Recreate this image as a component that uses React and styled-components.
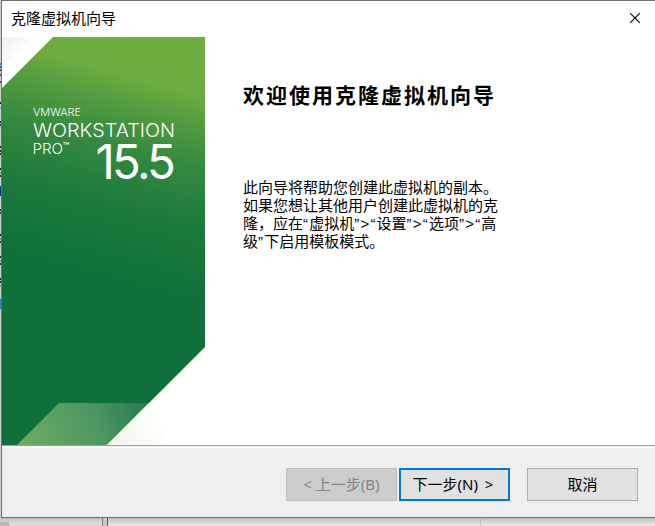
import React from "react";
import styled, { createGlobalStyle, css } from "styled-components";

const GlobalStyle = createGlobalStyle`
  * { box-sizing: border-box; }
  body { margin: 0; overflow: hidden; background: #e6e6e6; }
  button { font: inherit; }
`;

const Desktop = styled.div`
  width: 655px;
  height: 526px;
  display: grid;
  grid-template-columns: 1px 654px;
  grid-template-rows: 518px 8px;
  font-family: "Noto Sans CJK SC", sans-serif;
`;

const EdgeStrip = styled.div`
  background: #cfcfcf;
`;

const EdgeMarks = styled.svg`
  display: block;
`;

const Dialog = styled.section`
  display: flex;
  flex-direction: column;
  background: #fff;
  border: 1px solid #6e6e6e;
  border-right: 0;
`;

const TitleBar = styled.header`
  height: 36px;
  flex: none;
  display: flex;
  align-items: flex-start;
  justify-content: space-between;
  padding: 0 15px 0 9px;
  font-size: 15px;
  line-height: 34px;
  color: #000;
`;

const CloseButton = styled.button`
  display: flex;
  width: 10px;
  height: 10px;
  padding: 0;
  border: 0;
  background: none;
  margin-top: 12px;
`;

const Content = styled.main`
  display: flex;
  height: 408px;
  flex: none;
`;

const Banner = styled.svg`
  display: block;
  flex: none;
`;

const Message = styled.div`
  margin-left: 38px;
  padding-top: 41px;
  color: #000;
`;

const Heading = styled.h1`
  margin: 0;
  font-size: 21px;
  line-height: 32px;
  letter-spacing: 2px;
  font-weight: 700;
  white-space: nowrap;
`;

const Description = styled.div`
  margin-top: 68px;
  font-size: 15px;
  line-height: 18px;
`;

const Line = styled.div`
  height: 18px;
  white-space: nowrap;
`;

const Narrow = styled.span`
  font-family: "Liberation Sans", sans-serif;
  letter-spacing: 1.2px;
`;

const Footer = styled.footer`
  flex: 1;
  display: flex;
  align-items: flex-start;
  padding: 22px 0 0 284px;
  background: #efefef;
  border-top: 1px solid #a0a0a0;
  box-shadow: inset 0 1px #efefef, inset 0 2px #fff;
`;

const WizardButton = styled.button`
  width: 111px;
  height: 33px;
  padding: 0 0 2px;
  margin-left: ${(p) => p.$gap || 0}px;
  border: 1px solid #adadad;
  background: #e1e1e1;
  font-size: 15px;
  line-height: 28px;
  color: #000;
  white-space: pre;
  ${(p) => p.$primary && css`
    border: 2px solid #0078d7;
    padding-right: 3px;
    word-spacing: 3px;
  `}
  &:disabled {
    border-color: #bfbfbf;
    background: #cccccc;
    color: #838383;
  }
`;

const Latin = styled.span`
  font-family: "Noto Sans", sans-serif;
`;

const Backdrop = styled.div`
  grid-column: 1 / -1;
  display: grid;
  grid-template-columns: 9px 93px 6px 372px 1px 174px;
  background: linear-gradient(#bdbdbd, #e3e3e3 75%);
`;

const BackdropPane = styled.div`
  margin-top: ${(p) => p.$top || 0}px;
  background: ${(p) => p.$fill || "transparent"};
`;

const marks = [
  [63, "#3b7fb5"], [66, "#67507d"], [69, "#67507d"], [74, "#555"], [81, "#555"],
  [102, "#222"], [107, "#65bce8"], [121, "#35150b"], [124, "#182c91"],
  [146, "#222"], [150, "#222"], [153, "#222"], [168, "#222"], [172, "#55a9df"],
  [175, "#222"], [186, "#073987"], [188, "#073987"], [190, "#073987"], [192, "#073987"],
  [194, "#073987"], [209, "#35150b"], [212, "#182c91"], [234, "#222"], [238, "#55a9df"],
  [241, "#222"], [256, "#222"], [260, "#55a9df"], [263, "#222"], [278, "#222"],
  [281, "#222"], [285, "#55a9df"], [299, "#3478c5"], [301, "#3478c5"], [303, "#3478c5"],
  [305, "#3478c5"], [307, "#3478c5"],
];

function ProductBanner() {
  return (
    <Banner width="203" height="408" viewBox="2 37 203 408">
      <defs>
        <linearGradient id="green" gradientUnits="userSpaceOnUse" x1="-7" y1="27" x2="-61" y2="228">
          <stop offset="0" stopColor="#6eac40" />
          <stop offset=".06" stopColor="#6cab40" />
          <stop offset=".2" stopColor="#539c3f" />
          <stop offset=".4" stopColor="#35893f" />
          <stop offset=".68" stopColor="#1b7a3b" />
          <stop offset="1" stopColor="#0f7139" />
        </linearGradient>
        <linearGradient id="corner" gradientUnits="userSpaceOnUse" x1="2" y1="37" x2="20" y2="55">
          <stop offset="0" stopColor="#efefef" />
          <stop offset="1" stopColor="#fff" />
        </linearGradient>
        <linearGradient id="fold" gradientUnits="userSpaceOnUse" x1="22" y1="445" x2="140" y2="392">
          <stop offset="0" stopColor="#6dac60" />
          <stop offset=".6" stopColor="#4c9662" />
          <stop offset="1" stopColor="#277c4f" />
        </linearGradient>
        <linearGradient id="fade" gradientUnits="userSpaceOnUse" x1="110" y1="445" x2="160" y2="418">
          <stop offset="0" stopColor="#eff5e5" />
          <stop offset="1" stopColor="#fff" />
        </linearGradient>
      </defs>
      <path d="M2 37H205V445H2Z" fill="url(#green)" />
      <path d="M2 37H53L2 88Z" fill="url(#corner)" />
      <path d="M17 445L59 403H149L107 445Z" fill="url(#fold)" />
      <path d="M205 347V445H107Z" fill="#fff" />
      <path d="M107 445L149 403H178L160 445Z" fill="url(#fade)" />
      <g fill="#fff" fontFamily="Inter, sans-serif" fontWeight="300">
        <text x="33" y="116" fontSize="10" textLength="48" lengthAdjust="spacingAndGlyphs">VMWARE</text>
        <text x="33" y="137" fontSize="18.3" textLength="142" lengthAdjust="spacingAndGlyphs">WORKSTATION</text>
        <text x="32.5" y="154" fontSize="14.3" textLength="30.5" lengthAdjust="spacingAndGlyphs">PRO</text>
        <text x="62.5" y="150" fontSize="10" textLength="7" lengthAdjust="spacingAndGlyphs" fontWeight="400">™</text>
        <text x="95.5" y="179" fontSize="47.5" textLength="80.5" lengthAdjust="spacing" fontWeight="400">15.5</text>
      </g>
    </Banner>
  );
}

export default function App() {
  return (
    <Desktop>
      <GlobalStyle />
      <EdgeStrip>
        <EdgeMarks width="1" height="518">
          {marks.map(([y, color]) => (
            <rect key={y} y={y} width="1" height="2" fill={color} />
          ))}
        </EdgeMarks>
      </EdgeStrip>
      <Dialog>
        <TitleBar>
          <span>克隆虚拟机向导</span>
          <CloseButton aria-label="关闭">
            <svg width="10" height="10" viewBox="0 0 10 10">
              <path d="M0 0L10 10M10 0L0 10" stroke="#000" strokeWidth="1.1" />
            </svg>
          </CloseButton>
        </TitleBar>
        <Content>
          <ProductBanner />
          <Message>
            <Heading>欢迎使用克隆虚拟机向导</Heading>
            <Description>
              <Line>此向导将帮助您创建此虚拟机的副本。</Line>
              <Line>如果您想让其他用户创建此虚拟机的克</Line>
              <Line>
                隆，应在<Narrow>“</Narrow>虚拟机<Narrow>”&gt;“</Narrow>设置
                <Narrow>”&gt;“</Narrow>选项<Narrow>”&gt;“</Narrow>高
              </Line>
              <Line>级<Narrow>”</Narrow>下启用模板模式。</Line>
            </Description>
          </Message>
        </Content>
        <Footer>
          <WizardButton disabled><Latin>&lt; </Latin>上一步<Latin>(B)</Latin></WizardButton>
          <WizardButton $primary $gap={2}>下一步<Latin>(N) &gt;</Latin></WizardButton>
          <WizardButton $gap={17}>取消</WizardButton>
        </Footer>
      </Dialog>
      <Backdrop>
        <BackdropPane $top={4} $fill="#b9b9b9" />
        <BackdropPane $top={4} $fill="#d9d9d9" />
        <BackdropPane $fill="linear-gradient(90deg, #77797f 1px, #c6c7cc 1px 5px, #55565a 5px)" />
        <BackdropPane />
        <BackdropPane $fill="#c4c4c4" />
        <BackdropPane />
      </Backdrop>
    </Desktop>
  );
}
